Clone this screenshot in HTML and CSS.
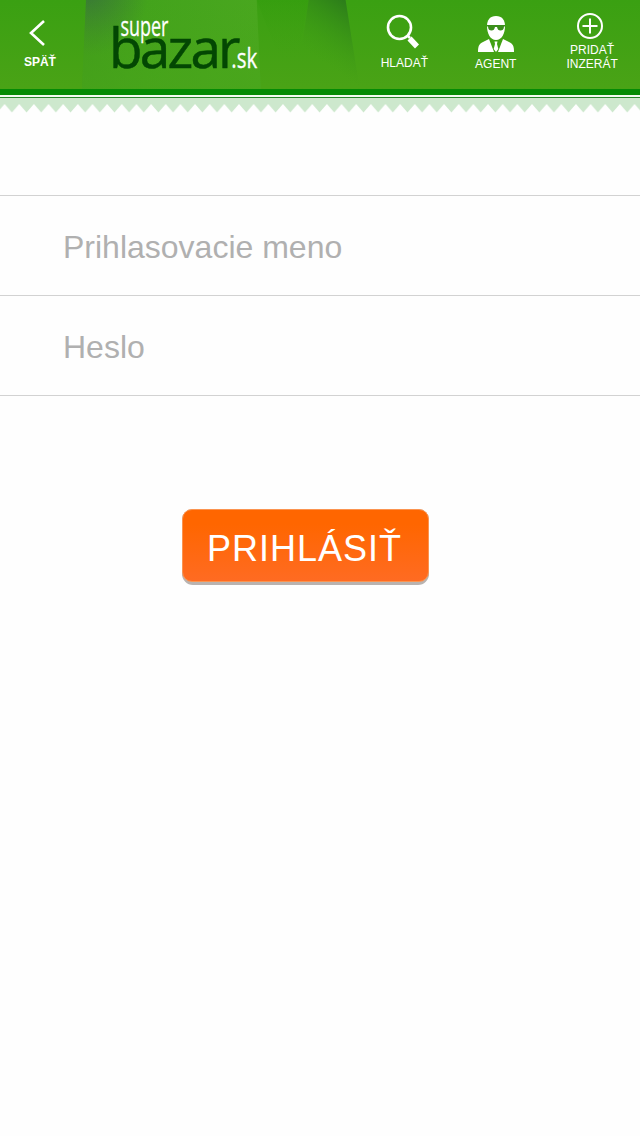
FILE: index.html
```html
<!DOCTYPE html>
<html lang="sk">
<head>
    <meta charset="UTF-8">
    <meta name="viewport" content="width=device-width, initial-scale=1.0">
    <title>superbazar.sk</title>
    <link rel="stylesheet" href="styles.css">
</head>
<body>
    <header class="header">
        <a class="nav-item back">
            <svg width="18" height="28" viewBox="0 0 18 28"><path d="M16 2L3 14L16 26" fill="none" stroke="#fff" stroke-width="2.6"/></svg>
            <span>SPÄŤ</span>
        </a>
        <svg class="logo" width="280" height="89" viewBox="80 0 280 89">
            <defs>
                <linearGradient id="panel" x1="0" y1="0" x2="1" y2="0">
                    <stop offset="0" stop-color="#3f9c1b"/>
                    <stop offset="0.35" stop-color="#43a31c"/>
                    <stop offset="1" stop-color="#49a71f"/>
                </linearGradient>
                <radialGradient id="corner" gradientUnits="userSpaceOnUse" cx="88" cy="-4" r="60">
                    <stop offset="0" stop-color="#3a7c34"/>
                    <stop offset="1" stop-color="#3a7c34" stop-opacity="0"/>
                </radialGradient>
                <linearGradient id="fade" x1="0" y1="0" x2="0" y2="1">
                    <stop offset="0" stop-color="#4aa516" stop-opacity="0"/>
                    <stop offset="1" stop-color="#4aa51a" stop-opacity="0.6"/>
                </linearGradient>
                <linearGradient id="beam" gradientUnits="userSpaceOnUse" x1="342" y1="-2" x2="306" y2="50">
                    <stop offset="0" stop-color="#2c7d1a"/>
                    <stop offset="1" stop-color="#3f9c16" stop-opacity="0"/>
                </linearGradient>
                <linearGradient id="beamSide" x1="0" y1="0" x2="0" y2="1">
                    <stop offset="0" stop-color="#2f9b0a" stop-opacity="0.35"/>
                    <stop offset="1" stop-color="#48a316" stop-opacity="0"/>
                </linearGradient>
            </defs>
            <path d="M86 0H257L261 89H82Z" fill="url(#panel)"/>
            <path d="M86 0H257L261 89H82Z" fill="url(#corner)"/>
            <path d="M86 0H257L261 89H82Z" fill="url(#fade)"/>
            <path d="M257 0H309L296 70L284 70Z" fill="url(#beamSide)"/>
            <path d="M309 0H346L360 89H296Z" fill="url(#beam)"/>
            <text class="logo-bazar" x="109" y="68">bazar</text>
            <text class="logo-small" x="120.500" y="36" textLength="48" lengthAdjust="spacingAndGlyphs">super</text>
            <text class="logo-small" x="231.500" y="68" textLength="26" lengthAdjust="spacingAndGlyphs">.sk</text>
        </svg>
        <a class="nav-item search">
            <svg width="36" height="36" viewBox="0 0 36 36">
                <circle cx="14.500" cy="13.500" r="11.500" fill="none" stroke="#fff" stroke-width="2.600"/>
                <path d="M22 21L25 24" stroke="#fff" stroke-width="2.500"/>
                <path d="M24.500 24.500L32 32.500" stroke="#fff" stroke-width="5.500"/>
            </svg>
            <span>HLADAŤ</span>
        </a>
        <a class="nav-item agent">
            <svg width="36" height="37" viewBox="0 0 36 37">
                <path d="M18 0C12 0 9 4 9 10C9 17 12 24 18 24C24 24 27 17 27 10C27 4 24 0 18 0Z" fill="#fff"/>
                <path d="M9 9H27V10.500H26C25.800 13.500 24.500 14.500 22.500 14.500C20.500 14.500 19.500 13.500 19 11H17C16.500 13.500 15.500 14.500 13.500 14.500C11.500 14.500 10.200 13.500 10 10.500H9Z" fill="#3b8f1c"/>
                <path d="M11 23L16 36H0C0 30 1 28 5 26Z" fill="#fff"/>
                <path d="M25 23L20 36H36C36 30 35 28 31 26Z" fill="#fff"/>
                <path d="M16.500 25.500H19.500L19 28L20.300 33L18 36L15.700 33L17 28Z" fill="#fff"/>
            </svg>
            <span>AGENT</span>
        </a>
        <a class="nav-item add">
            <svg width="28" height="28" viewBox="0 0 28 28"><path d="M14 6.500V21.500M6.500 14H21.500" stroke="#fff" stroke-width="2"/><circle cx="14" cy="14" r="12" fill="none" stroke="#fff" stroke-width="2"/></svg>
            <span>PRIDAŤ<br>INZERÁT</span>
        </a>
    </header>
    <div class="stripe"></div>
    <svg class="zigzag" width="640" height="15">
        <defs>
            <pattern id="teeth" x="4.600" width="14.650" height="15" patternUnits="userSpaceOnUse">
                <path d="M0 0H14.650V6L7.325 14.500L0 6Z" fill="#cde8cd"/>
            </pattern>
        </defs>
        <rect width="640" height="15" fill="url(#teeth)"/>
    </svg>
    <form class="login">
        <input class="field" type="text" placeholder="Prihlasovacie meno">
        <input class="field" type="password" placeholder="Heslo">
        <button class="submit" type="button"><span class="submit-face">PRIHLÁSIŤ</span></button>
    </form>
</body>
</html>
```

FILE: styles.css
```css
body {
    margin: 0;
    background: #fefefe;
    font-family: "Liberation Sans", Arial, sans-serif;
}

.header {
    display: flex;
    height: 89px;
    background: linear-gradient(#3aa012, #4aa316);
    color: #fff;
}

.nav-item {
    display: flex;
    flex-direction: column;
    align-items: center;
    box-sizing: border-box;
    font-size: 12px;
    line-height: 14px;
    text-align: center;
}

.back {
    width: 80px;
    padding-top: 19px;
    font-weight: bold;
}

.back svg {
    margin-right: 6px;
}

.back span {
    margin-top: 8px;
}

.logo {
    display: block;
}

.logo-bazar {
    font-family: "Open Sans", sans-serif;
    font-size: 55px;
    letter-spacing: -2.8px;
    fill: #034703;
    stroke: #034703;
    stroke-width: 0.5px;
}

.logo-small {
    font-family: "Open Sans", sans-serif;
    font-size: 27px;
    fill: #fff;
    stroke: #fff;
    stroke-width: 0.3px;
}

.search {
    width: 89px;
    padding: 14px 0 0 1px;
}

.search svg {
    margin-right: 3px;
}

.search span {
    margin-top: 6px;
}

.agent {
    width: 94px;
    padding: 16px 0 0 2px;
}

.agent span {
    margin: 4px 1px 0 0;
}

.add {
    width: 98px;
    padding: 12px 0 0 2px;
}

.add svg {
    margin-right: 4px;
}

.add span {
    margin-top: 3px;
}

.stripe {
    height: 2px;
    border-top: 6px solid #058b05;
    border-bottom: 1px solid #27852b;
    background: #f2fbf2;
}

.zigzag {
    display: block;
}

.login {
    display: flex;
    flex-direction: column;
    margin-top: 82px;
    border-top: 1px solid #d2d2d2;
}

.field {
    height: 100px;
    box-sizing: border-box;
    padding: 3px 63px 0;
    border: 0;
    border-bottom: 1px solid #d2d2d2;
    background: transparent;
    font-family: inherit;
    font-size: 32px;
    outline: none;
}

.field::placeholder {
    color: #b0b0b0;
}

.submit {
    width: 247px;
    height: 76px;
    margin: 113px 0 0 182px;
    padding: 0 0 3px;
    border: 0;
    border-radius: 11px;
    background: #b9b3b0;
    color: #fff;
    font-family: inherit;
    font-size: 36px;
    letter-spacing: 1px;
    cursor: pointer;
}

.submit-face {
    display: block;
    height: 73px;
    box-sizing: border-box;
    padding: 3px 2px 0 0;
    border: 1px solid #fb9450;
    border-radius: 10px;
    background: linear-gradient(#ff6600 20%, #ff6b22);
    line-height: 72px;
}
```
